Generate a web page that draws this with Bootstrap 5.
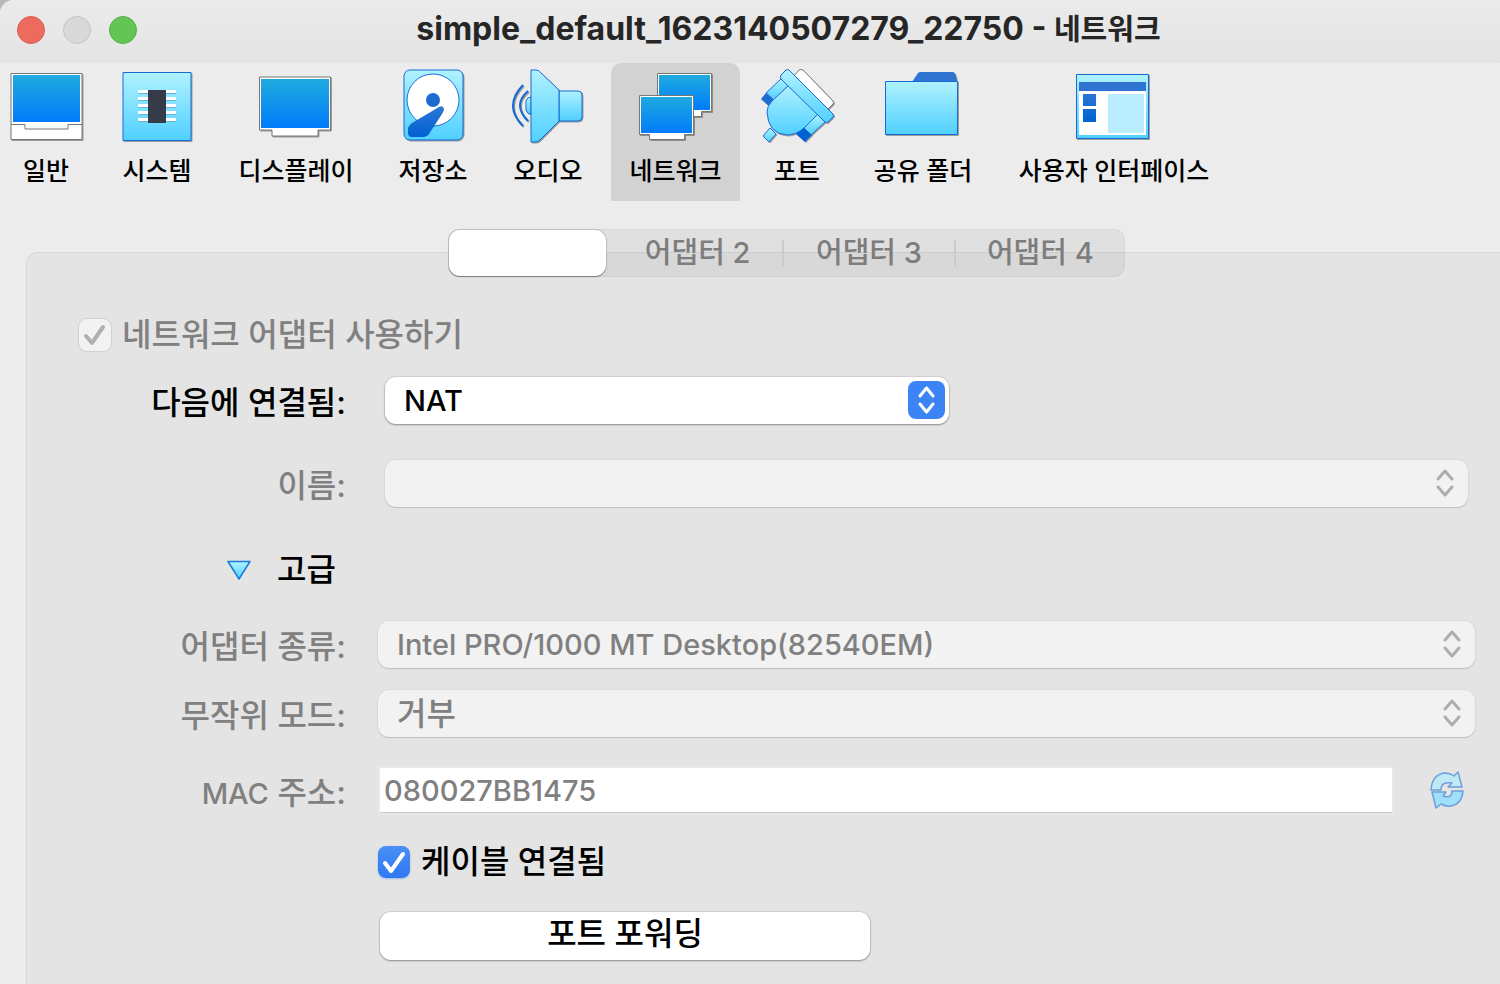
<!DOCTYPE html>
<html lang="ko">
<head>
<meta charset="utf-8">
<meta name="viewport" content="width=device-width, initial-scale=1">
<title>simple_default_1623140507279_22750 - 네트워크</title>
<link href="https://cdn.jsdelivr.net/npm/bootstrap@5.3.0/dist/css/bootstrap.min.css" rel="stylesheet">
<style>
  body { font-family: Inter, "Noto Sans CJK KR", sans-serif; font-size: 32px; font-weight: 500; line-height: 40px; color: #000; background: #b9b9b9; min-height: 100vh; display: flex; }
  .window { background: #ececec; border-top-left-radius: 14px; overflow: hidden; }
  .titlebar { height: 63px; background: linear-gradient(#ebebeb, #e4e4e4); padding: 0 17px 4px; }
  .lights { gap: 18px; }
  .light { width: 28px; height: 28px; border-radius: 50%; border: 1px solid; padding: 0; }
  .light-close { background: #ed6a5e; border-color: #dd5a50; }
  .light-min { background: #d9d9d9; border-color: #c3c3c3; }
  .light-zoom { background: #62c554; border-color: #53b046; }
  .title-text { font-size: 29px; font-weight: 700; color: #262626; padding-right: 43px; white-space: nowrap; }
  .title-name { font-size: 32px; }
  .toolbar { display: grid; grid-template-columns: 92px 130px 148px 126px 104px 11px 129px 114px 138px 244px; height: 138px; }
  .tool { display: flex; flex-direction: column; align-items: center; gap: 11px; border: 0; background: none; padding: 5px 0 0; font-size: 25px; line-height: 32px; font-weight: 500; white-space: nowrap; color: #000; }
  .tool.active { background: #d2d2d2; border-radius: 10px 10px 0 0; grid-column: 7; }
  .tool svg { width: 80px; height: 76px; filter: drop-shadow(1px 1px 0 #0005); }
  .tabs { width: 677px; height: 48px; border-radius: 11px; background: #0000000d; border: 1px solid #0000000a; margin: 28px 0 0 448px; z-index: 1; }
  .tab { border: 0; background: none; flex: 1; color: #7d7d7d; font-size: 29px; font-weight: 500; line-height: 44px; padding: 0 0 0 4px; position: relative; }
  .tab.active { background: #fff; border-radius: 11px; box-shadow: 0 0 1px 1px #00000020, 0 1px 1px #0005; flex: 0 0 157px; margin-right: 4px; padding: 0; }
  .tab + .tab + .tab::before { content: ""; position: absolute; left: 1px; top: 10px; height: 26px; width: 2px; background: #cbcbcb; }
  .panel { margin: -25px 0 0 26px; border: solid #d7d7d7; border-width: 1px 0 0 1px; border-top-left-radius: 12px; background: #e4e4e4; padding-top: 65px; }
  .field { display: grid; grid-template-columns: 319px 1fr; align-items: center; height: 48px; }
  .field > .name { text-align: right; padding-top: 6px; }
  .off, .off label { color: #808080; }
  .control { padding: 0 25px 0 32px; }
  .control-in { padding: 0 32px 0 39px; }
  .pop { position: relative; width: 100%; }
  .pop-short { max-width: 564px; }
  .pop select { appearance: none; display: block; width: 100%; height: 47px; border: 0; border-radius: 11px; background: #fff; box-shadow: 0 0 1px 1px #00000014, 0 1px 2px #0005; padding: 2px 48px 0 19px; color: #000; opacity: 1; font-weight: 500; }
  .pop select:disabled { background: #f2f2f2; color: #808080; box-shadow: 0 0 1px 1px #0000000a, 0 1px 1px #0002; }
  .pop svg { position: absolute; top: 4px; right: 4px; width: 38px; height: 38px; pointer-events: none; }
  .tick-row { height: 34px; gap: 11px; }
  .tick { appearance: none; width: 32px; height: 32px; border-radius: 8px; margin: 0; background: linear-gradient(#4a90f7, #2e78f3) no-repeat; box-shadow: 0 1px 2px #2e78f366; opacity: 1; }
  .tick:disabled { background: #f2f2f2; box-shadow: 0 0 1px 1px #00000018; }
  .tick-box { position: relative; display: flex; }
  .tick-box svg { position: absolute; inset: 0; pointer-events: none; }
  .mac { height: 45px; border: 0; border-bottom: 1px solid #c8c8c8; box-shadow: 0 0 0 2px #e9e9e9; background: #fff; color: #808080; font-weight: 500; padding: 2px 4px 0; margin-left: 2px; min-width: 0; }
  .reload { margin: 0 10px 0 37px; }
  .latin, .pop select.latin { font-size: 29px; }
  .push { width: 490px; height: 48px; border: 0; border-radius: 11px; background: #fff; box-shadow: 0 0 1px 1px #00000014, 0 1px 2px #0005; padding: 0 0 4px; margin-left: 2px; font-weight: 500; }
  .plain { border: 0; background: none; padding: 0; font-weight: 500; }
  .expander { gap: 26px; padding-right: 10px; }
</style>
</head>
<body>
<svg width="0" height="0" class="position-absolute" aria-hidden="true">
  <defs>
    <linearGradient id="deep" x2="0" y2="1"><stop stop-color="#20aadf"/><stop offset="1" stop-color="#007bfa"/></linearGradient>
    <linearGradient id="pale" x2="0" y2="1"><stop stop-color="#b0f2ff"/><stop offset="1" stop-color="#50d0ff"/></linearGradient>
    <linearGradient id="navy" x2="0" y2="1"><stop stop-color="#2c76d4"/><stop offset="1" stop-color="#0062d2"/></linearGradient>
  </defs>
</svg>
<main class="window flex-fill d-flex flex-column">
  <header class="titlebar d-flex align-items-center">
    <div class="lights d-flex">
      <button class="light light-close" aria-label="닫기"></button>
      <button class="light light-min" aria-label="최소화" disabled></button>
      <button class="light light-zoom" aria-label="확대"></button>
    </div>
    <div class="title-text flex-fill text-center"><span class="title-name">simple_default_1623140507279_22750 - </span>네트워크</div>
  </header>

  <nav class="toolbar">
    <button class="tool"><svg viewBox="0 0 80 76"><path d="M5 5.500h71v66H5z" fill="#fff" stroke="#777"/><path d="M7 7h67v47H7z" fill="url(#deep)"/><path d="M5 56.500h14v4.500h43v-4.500h14" fill="none" stroke="#777"/></svg><span>일반</span></button>
    <button class="tool"><svg viewBox="0 0 80 76"><path d="M6 4.500h68v68H6z" fill="url(#pale)" stroke="#176bd6"/><path d="M21 23.500h38M21 30.500h38M21 37.500h38M21 44.500h38M21 51.500h38" stroke="#fff" stroke-width="3"/><path d="M21 25.500h38M21 32.500h38M21 39.500h38M21 46.500h38M21 53.500h38" stroke="#6ab0d8"/><path d="M31 22h18v33H31z" fill="#363b49"/></svg><span>시스템</span></button>
    <button class="tool"><svg viewBox="0 0 80 76"><path d="M3.500 9h71v53H62v6H16v-6H3.500z" fill="#fff" stroke="#777"/><path d="M5 11h68v49H5z" fill="url(#deep)"/></svg><span>디스플레이</span></button>
    <button class="tool"><svg viewBox="0 0 80 76"><rect x="11" y="2" width="59" height="70" rx="6" fill="url(#pale)" stroke="#1769d5"/><circle cx="40" cy="32" r="26" fill="#fff" stroke="#1b71d8"/><circle cx="40" cy="32" r="7" fill="#1e6cd2"/><path d="M46 39q4-2 5 2 0 2-2 5L36 66q-2 3-5 3H18q-3-1-3-4v-5q1-3 4-5z" fill="url(#navy)"/></svg><span>저장소</span></button>
    <button class="tool"><svg viewBox="0 0 80 76"><path d="M23 29q-4 0-5 4v9q1 4 5 4z" fill="url(#pale)" stroke="#1b71d8"/><path d="M51 23h19q4 0 4 4v22q0 4-4 4H51z" fill="url(#pale)" stroke="#1769d5"/><path d="M23 2h5q3 0 4 2l19 18v31L32 72q-2 2-4 2h-5z" fill="url(#pale)" stroke="#1769d5"/><path d="M20 23q-16 14 0 30M15 17q-20 21 0 41" fill="none" stroke="#1769d5" stroke-width="2"/></svg><span>오디오</span></button>
    <button class="tool active"><svg viewBox="0 0 80 76"><path d="M21.500 5.500h54v38h-10v5h-34v-5h-10z" fill="#fff" stroke="#777"/><path d="M23 7h51v35H23z" fill="url(#deep)"/><path d="M3.500 27.500h54v39h-9v5h-35v-5h-10z" fill="#fff" stroke="#777"/><path d="M5 29h51v36H5z" fill="url(#deep)"/></svg><span>네트워크</span></button>
    <button class="tool"><svg viewBox="0 0 80 76"><path d="M36 9l6-7q2-1 4 0l30 31q1 2 0 3l-5 5z" fill="#fff" stroke="#777"/><path d="M25 10l7 7-15 15-8-7z" fill="url(#pale)" stroke="#1769d5"/><path d="M9 25l9 8-5 6-9-8z" fill="#1e6cd2"/><path d="M13 60l6 6-7 8-6-6z" fill="url(#pale)" stroke="#1769d5"/><path d="M60 46l8 8-14 13-8-8z" fill="url(#pale)" stroke="#1769d5"/><path d="M46 59l9 8-7 7-9-8z" fill="#0062d2"/><path d="M32 17l29 29-14 14q-8 7-17 7Q11 66 10 44q0-6 5-11z" fill="url(#pale)" stroke="#1769d5"/><path d="M29 2q1-1 3 0l44 44q1 2 0 3l-5 5q-1 1-3 0L24 11q-1-2 0-4z" fill="url(#pale)" stroke="#1769d5"/></svg><span>포트</span></button>
    <button class="tool"><svg viewBox="0 0 80 76"><path d="M29 14l6-9q1-1 3-1h32q3 0 4 10v3z" fill="#2f74d0"/><path d="M2.500 13.500h72v53h-72z" fill="url(#pale)" stroke="#1769d5"/></svg><span>공유 폴더</span></button>
    <button class="tool"><svg viewBox="0 0 80 76"><path d="M2.500 6.500h72v64h-72z" fill="url(#pale)" stroke="#1769d5"/><path d="M5 15h67v52H5z" fill="#fff"/><path d="M5 14h67v9H5z" fill="#2f74d0"/><path d="M9 26h13v12H9zM9 41h13v13H9z" fill="url(#navy)"/><path d="M34 26h36v39H34z" fill="#baedff"/></svg><span>사용자 인터페이스</span></button>
  </nav>

  <div class="tabs d-flex position-relative" role="tablist">
    <button class="tab active" role="tab" aria-label="어댑터 1"></button>
    <button class="tab" role="tab">어댑터 2</button>
    <button class="tab" role="tab">어댑터 3</button>
    <button class="tab" role="tab">어댑터 4</button>
  </div>

  <form class="panel flex-fill">
    <div class="tick-row off d-flex align-items-center" style="margin-left:52px">
      <span class="tick-box"><input class="tick" type="checkbox" id="use" checked disabled><svg width="32" height="32"><path d="M7 17l6 7L24 8" fill="none" stroke="#b0b0b0" stroke-width="4" stroke-linecap="round" stroke-linejoin="round"/></svg></span>
      <label for="use">네트워크 어댑터 사용하기</label>
    </div>
    <div class="field" style="margin-top:24px">
      <label class="name" for="attached">다음에 연결됨:</label>
      <div class="control-in"><div class="pop pop-short"><select class="latin" id="attached"><option>NAT</option></select>
        <svg viewBox="0 0 38 38"><rect x="1" width="37" height="38" rx="8" fill="#3c84f6"/><path d="M13 15l6.500-8 6.500 8M13 23l6.500 8 6.500-8" fill="none" stroke="#fff" stroke-width="3" stroke-linecap="round" stroke-linejoin="round"/></svg></div></div>
    </div>
    <div class="field off" style="margin-top:35px">
      <label class="name" for="netname">이름:</label>
      <div class="control-in"><div class="pop"><select id="netname" disabled><option></option></select>
        <svg viewBox="0 0 38 38"><path d="M12 15l7-8 7 8M12 23l7 8 7-8" fill="none" stroke="#adadad" stroke-width="3" stroke-linecap="round" stroke-linejoin="round"/></svg></div></div>
    </div>
    <div class="field" style="margin-top:39px">
      <button class="plain expander d-flex align-items-center justify-content-end" type="button"><svg width="24" height="20" viewBox="0 0 24 20"><path d="M1 1.500h22L12 19z" fill="url(#pale)" stroke="#1b79dc" stroke-width="1.500" stroke-linejoin="round"/></svg>고급</button>
    </div>
    <div class="field off" style="margin-top:26px">
      <label class="name" for="kind">어댑터 종류:</label>
      <div class="control"><div class="pop"><select class="latin" id="kind" disabled><option>Intel PRO/1000 MT Desktop(82540EM)</option></select>
        <svg viewBox="0 0 38 38"><path d="M12 15l7-8 7 8M12 23l7 8 7-8" fill="none" stroke="#adadad" stroke-width="3" stroke-linecap="round" stroke-linejoin="round"/></svg></div></div>
    </div>
    <div class="field off" style="margin-top:21px">
      <label class="name" for="mode">무작위 모드:</label>
      <div class="control"><div class="pop"><select id="mode" disabled><option>거부</option></select>
        <svg viewBox="0 0 38 38"><path d="M12 15l7-8 7 8M12 23l7 8 7-8" fill="none" stroke="#adadad" stroke-width="3" stroke-linecap="round" stroke-linejoin="round"/></svg></div></div>
    </div>
    <div class="field off" style="margin-top:29px">
      <label class="name" for="mac"><span class="latin">MAC</span> 주소:</label>
      <div class="control d-flex align-items-center">
        <input class="mac latin flex-fill" id="mac" value="080027BB1475" disabled>
        <button class="plain reload d-flex" type="button" aria-label="새로 고침" disabled><svg width="36" height="38" viewBox="0 0 36 38" stroke="#6f9fdc" stroke-width="1.500" stroke-linejoin="round"><path d="M2 19Q3 4 15 2q6 0 10 3l4-4 4 15H19l4-4Q12 10 12 19z" fill="#bfe9f5"/><path d="M34 20q-1 13-12 15-5 1-10-2l-5 4-4-16h14l-3 4q9 3 9-5z" fill="#a0e0f8"/></svg></button>
      </div>
    </div>
    <div class="field" style="margin-top:24px">
      <div></div>
      <div class="control tick-row d-flex align-items-center">
        <span class="tick-box"><input class="tick" type="checkbox" id="cable" checked><svg width="32" height="32"><path d="M7 17l6 8L25 8" fill="none" stroke="#fff" stroke-width="4" stroke-linecap="round" stroke-linejoin="round"/></svg></span>
        <label for="cable">케이블 연결됨</label>
      </div>
    </div>
    <div class="field" style="margin-top:26px">
      <div></div>
      <div class="control"><button class="push d-block" type="button">포트 포워딩</button></div>
    </div>
  </form>
</main>
<script src="https://cdn.jsdelivr.net/npm/bootstrap@5.3.0/dist/js/bootstrap.bundle.min.js"></script>
</body>
</html>
